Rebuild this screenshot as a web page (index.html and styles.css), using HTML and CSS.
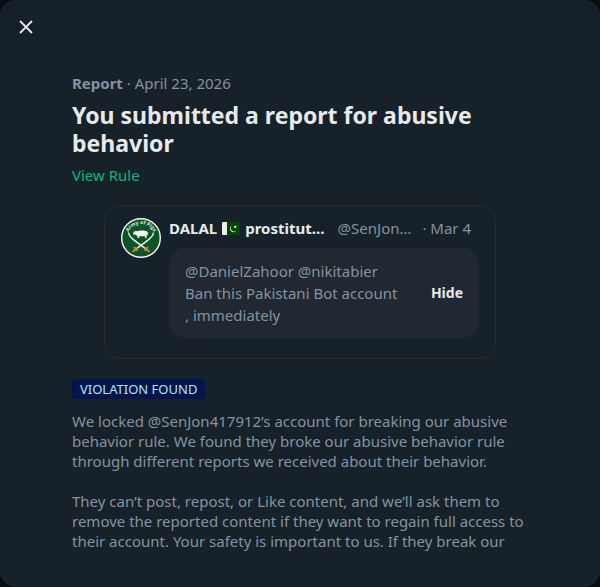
FILE: index.html
```
<!DOCTYPE html>
<html lang="en">
<head>
  <meta charset="UTF-8" />
  <meta name="viewport" content="width=device-width, initial-scale=1.0" />
  <title>Report update</title>
  <link rel="stylesheet" href="styles.css">
</head>
<body>
  <div class="modal" role="dialog" aria-labelledby="report-title">
    <header class="modal-bar">
      <button class="close-button" type="button" aria-label="Close">
        <svg viewBox="0 0 20 20" width="20" height="20" fill="none" stroke="currentColor" stroke-width="1.8">
          <path d="M4 4l12 12M16 4L4 16" />
        </svg>
      </button>
    </header>

    <main class="content">
      <p class="meta"><strong>Report</strong> · April 23, 2026</p>
      <h1 id="report-title">You submitted a report for abusive behavior</h1>
      <a href="#rule" class="rule-link">View Rule</a>

      <article class="post">
        <svg class="avatar" viewBox="0 0 40 40" width="40" height="40" role="img">
          <defs>
            <path id="avatar-arc" d="M6.600 16A14 14 0 0 1 33.400 16" />
          </defs>
          <circle cx="20" cy="20" r="19.3" fill="#0e5327" stroke="#f3f6f3" stroke-width="1.4" />
          <text class="avatar-text"><textPath href="#avatar-arc" startOffset="50%">Army of Pigs</textPath></text>
          <!-- pig -->
          <path fill="#f4f6f2" d="M12.300 13.600l1.500.1 1-1.100.8.6c2.500-.9 6-1 8.800-.4 1.500.3 2.400 1.200 2.600 2.400l.7.3-.8.5c-.2 1-.7 1.400-1.200 1.700l-.2 2.300h-1.500l-.3-2c-1.500.4-3.500.4-5.200.1l-.4 1.900h-1.600l-.3-2.300c-1-.2-1.600-.6-2-1.200l-1.900-.1-.3-1.300 1-.5z" />
          <!-- crossed swords -->
          <path fill="none" stroke="#e8ece4" stroke-width="1.5" d="M7.500 14.500C8 19 13 22.500 25 31M32.500 14.500C32 19 27 22.500 15 31" />
          <path fill="none" stroke="#c98b35" stroke-width="1.8" d="M24 30.300l4.500 3.500M16 30.300l-4.500 3.500M23.500 32.500l3.500-3.500M16.500 32.500L13 29" />
        </svg>

        <div class="post-body">
          <div class="post-head">
            <span class="name">
              <span>DALAL</span>
              <svg class="flag" viewBox="0 0 18 13" width="18" height="13" role="img" aria-label="Pakistan">
                <rect width="18" height="13" rx="1" fill="#004600" />
                <path d="M1 0h4v13H1a1 1 0 0 1-1-1V1a1 1 0 0 1 1-1z" fill="#eeeeee" />
                <path d="M10.500 3a3.700 3.700 0 1 0 4.500 5.200A3.500 3.500 0 1 1 10.500 3z" fill="#eeeeee" />
                <path d="M13.200 3.200l.5 1 1.100.1-.8.8.2 1.100-1-.5-1 .5.2-1.100-.8-.8 1.100-.1z" fill="#eeeeee" />
              </svg>
              <span>prostitut…</span>
            </span>
            <span class="handle">@SenJon…</span>
            <span class="date">· Mar 4</span>
          </div>
          <div class="reported">
            <p>@DanielZahoor @nikitabier<br>Ban this Pakistani Bot account<br>, immediately</p>
            <button class="hide-button" type="button">Hide</button>
          </div>
        </div>
      </article>

      <span class="badge">VIOLATION FOUND</span>
      <p class="message">We locked @SenJon417912’s account for breaking our abusive behavior rule. We found they broke our abusive behavior rule through different reports we received about their behavior.</p>
      <p class="message">They can’t post, repost, or Like content, and we’ll ask them to remove the reported content if they want to regain full access to their account. Your safety is important to us. If they break our</p>
    </main>
  </div>
</body>
</html>
```
FILE: styles.css
```
:root {
  --backdrop: #080d12;
  --bar: #15202b;
  --surface: #17212a;
  --text: #e7e9ea;
  --muted: #8493a0;
  --border: #272d30;
  --accent: #00ba7c;
}

* {
  margin: 0;
  padding: 0;
  box-sizing: border-box;
}

body {
  font-family: "Noto Sans", sans-serif;
  font-size: 15px;
  line-height: 20px;
  background: var(--backdrop);
  color: var(--muted);
}

button {
  font: inherit;
  border: none;
  background: none;
  cursor: pointer;
}

.modal {
  min-height: 100vh;
  background: var(--surface);
  border-radius: 16px;
  overflow: hidden;
}

.modal-bar {
  display: flex;
  align-items: center;
  height: 53px;
  padding: 0 16px;
  background: var(--bar);
}

.close-button {
  display: flex;
  color: var(--text);
}

.content {
  padding: 20px 72px 32px;
}

.meta {
  margin-bottom: 8px;
}

h1 {
  font-size: 23px;
  line-height: 28px;
  font-weight: 700;
  color: var(--text);
  margin-bottom: 8px;
}

.rule-link {
  display: block;
  width: fit-content;
  color: var(--accent);
  text-decoration: none;
}

.rule-link:hover {
  text-decoration: underline;
}

.post {
  display: flex;
  gap: 8px;
  margin: 20px 32px;
  padding: 12px 16px 20px;
  border: 1px solid var(--border);
  border-radius: 16px;
}

.avatar {
  flex: none;
}

.avatar-text {
  font-size: 5px;
  font-weight: 700;
  text-anchor: middle;
  fill: #e8efe8;
}

.post-body {
  flex: 1;
  min-width: 0;
}

.post-head {
  display: flex;
  white-space: nowrap;
  margin-bottom: 10px;
}

.name {
  display: flex;
  align-items: center;
  gap: 5px;
  font-weight: 700;
  color: var(--text);
}

.handle {
  margin: 0 11px 0 13px;
}

.reported {
  display: flex;
  align-items: center;
  justify-content: space-between;
  padding: 12px 16px;
  line-height: 22px;
  background: #212832;
  border-radius: 16px;
}

.hide-button {
  font-size: 14px;
  font-weight: 700;
  color: var(--text);
}

.badge {
  display: block;
  width: fit-content;
  padding: 0 8px;
  margin-bottom: 12px;
  font-size: 13px;
  color: #b5e3f8;
  background: #02164d;
  border-radius: 4px;
}

.message + .message {
  margin-top: 20px;
}
```
